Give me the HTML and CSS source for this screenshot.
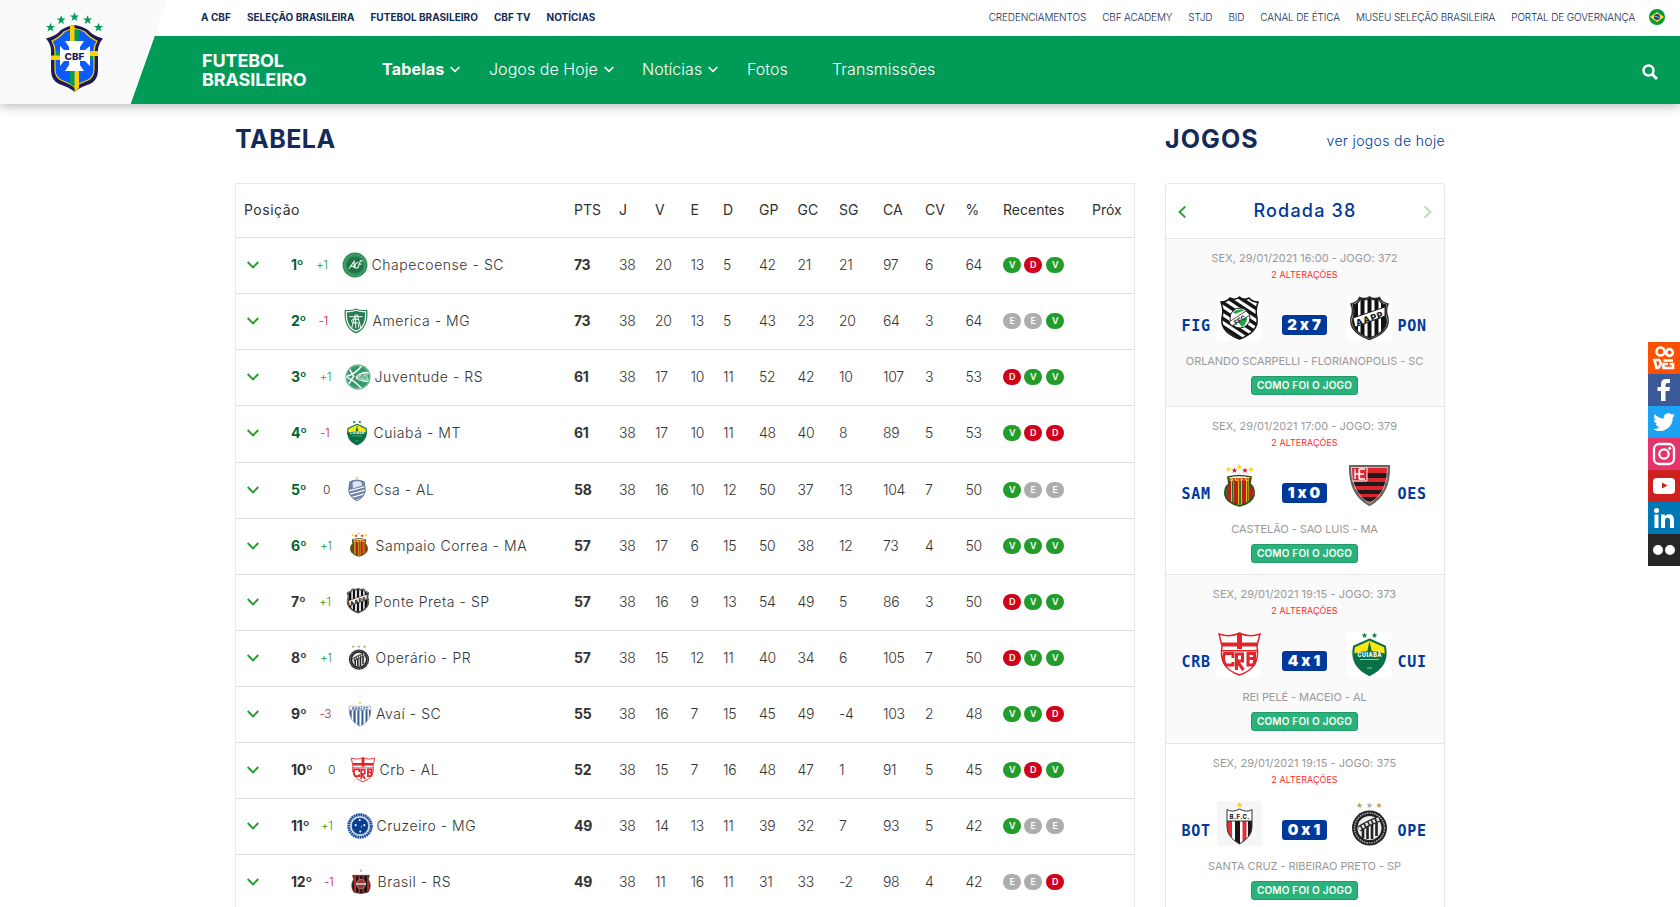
FILE: index.html
```html
<!DOCTYPE html>
<html lang="pt-BR">
<head>
<meta charset="utf-8">
<title>Futebol Brasileiro - CBF</title>
<link rel="stylesheet" href="styles.css">
</head>
<body>
<svg class="sprite" width="0" height="0" aria-hidden="true">
  <defs>
    <path id="star" d="M0-3 .8-1H3L1.2.4 1.9 2.6 0 1.3-1.9 2.6-1.2.4-3-1H-.8z"/>
    <clipPath id="c-fig"><path d="M4 6Q10 6 13 2Q18 5 22.500 1Q27 5 32 2Q35 6 41 6Q38 14 40 22Q42 36 22.500 43Q3 36 5 22Q7 14 4 6z"/></clipPath>
    <clipPath id="c-pon"><path d="M6 9Q11 8 13 3Q18 5 22.500 2Q27 5 32 3Q34 8 39 9Q37 15 39 22Q42 35 22.500 42Q3 35 6 22Q8 15 6 9z"/></clipPath>
    <clipPath id="c-sam"><path d="M11 14H34L33 20Q38 24 37 31Q35 39 22.500 41Q10 39 8 31Q7 24 12 20z"/></clipPath>
    <clipPath id="c-oes"><path d="M4 3H41Q42 30 22.500 41Q3 30 4 3z"/></clipPath>
    <clipPath id="c-crb"><path d="M2 2Q13 6 22.500 1Q32 6 43 2L40 14Q44 36 22.500 43Q1 36 5 14z"/></clipPath>
    <clipPath id="c-cui"><path d="M22.500 8 38 15Q42 34 22.500 43Q3 34 7 15z"/></clipPath>
    <clipPath id="c-bot"><path d="M10 10H35V26Q35 36 22.500 43Q10 36 10 26z"/></clipPath>
    <clipPath id="c-ava"><path d="M4 10H41Q44 34 22.500 44Q1 34 4 10z"/></clipPath>
    <clipPath id="c-csa"><path d="M10 10Q22 4 35 10L37 26Q34 38 22.500 43Q11 38 8 26z"/></clipPath>
    <clipPath id="c-bra"><path d="M8 11H37L35 18Q42 28 35 40Q22 45 10 40Q3 28 10 18z"/></clipPath>
    <clipPath id="c-juv"><circle cx="22.500" cy="22.500" r="20"/></clipPath>

    <symbol id="fig" viewBox="0 0 45 45">
      <path fill="#fff" d="M0 0h45v45H0z"/>
      <g clip-path="url(#c-fig)"><path fill="#fff" d="M0 0h45v45H0z"/><path stroke="#151515" stroke-width="3.600" d="M-4-8 49 27M-4 0 49 35M-4 8 49 43M-4 16 49 51M-4 24 49 59M-4-16 49 19M-4-24 49 11"/></g>
      <path d="M4 6Q10 6 13 2Q18 5 22.500 1Q27 5 32 2Q35 6 41 6Q38 14 40 22Q42 36 22.500 43Q3 36 5 22Q7 14 4 6z" fill="none" stroke="#151515" stroke-width="1.500"/>
      <circle cx="23" cy="22" r="10" fill="#fff" stroke="#222"/><path d="M16 16Q22 12 28 14L18 18zM19 26Q26 25 30 20Q31 27 25 31L22 27z" fill="#22a53a"/>
      <path d="M12 26 29 15 33 19 15 30z" fill="#fff" stroke="#222" stroke-width=".8"/><text x="15.500" y="26" transform="rotate(-31 23 22)" class="crest-text" font-size="6.500" fill="#333">FFC</text>
    </symbol>
    <symbol id="pon" viewBox="0 0 45 45">
      <path d="M4 8Q10 7 12.500 1.500Q18 4 22.500.8Q27 4 32.500 1.500Q35 7 41 8Q38 15 41 22Q43 36 22.500 43.500Q2 36 4 22Q7 15 4 8z" fill="#fff" stroke="#333" stroke-width="1.500"/>
      <g clip-path="url(#c-pon)"><path fill="#fff" d="M0 0h45v45H0z"/><path fill="#111" d="M6 0h5v45H6zM13.500 0h4v45h-4zM20.500 0h4v45h-4zM27.500 0h4v45h-4zM34 0h5v45h-5z"/></g>
      <path d="M6 9Q11 8 13 3Q18 5 22.500 2Q27 5 32 3Q34 8 39 9Q37 15 39 22Q42 35 22.500 42Q3 35 6 22Q8 15 6 9z" fill="none" stroke="#222" stroke-width="1.400"/>
      <path d="M6 22 38 11V20L8 31z" fill="#fff" stroke="#222"/><text x="8" y="26" transform="rotate(-18 22 22)" class="crest-text" font-size="9" textLength="28" fill="#111">AAPP</text>
    </symbol>
    <symbol id="sam" viewBox="0 0 45 45">
      <g fill="#ffd426"><use href="#star" x="11.500" y="5.500"/><use href="#star" x="22.500" y="2.800"/><use href="#star" x="34" y="5.500"/></g><g fill="#d9202c"><use href="#star" x="17.500" y="6.500"/><use href="#star" x="28" y="6.500"/></g>
      <g clip-path="url(#c-sam)"><path fill="#f0b91a" d="M0 0h45v45H0z"/><path fill="#b92118" d="M10 17h4v28h-4zM17 17h4v28h-4zM25 17h4v28h-4zM32 17h4v28h-4z"/><path fill="#267324" d="M8 17h3v25H8zM15 17h1.500v25H15zM22 17h2v25h-2zM30 17h1.500v25H30z"/><path fill="#d23d1c" d="M10 12h25v5H10z"/></g>
      <path d="M11 13Q22 10 34 13L33 20Q38 24 37 31Q35 39 22.500 42Q10 39 8 31Q7 24 12 20z" fill="none" stroke="#295314" stroke-width="1.700"/><text x="13" y="17" class="crest-text" font-size="5" textLength="19" fill="#ffe73d">SCFC</text>
    </symbol>
    <symbol id="oes" viewBox="0 0 45 45">
      <g clip-path="url(#c-oes)"><path fill="#dd2530" d="M0 0h45v45H0z"/><path fill="#1e1a1b" d="M0 9h45v5H0zM0 18h45v4H0zM0 26h45v4H0zM0 33h45v4H0z"/><path fill="#dd2530" d="M4 3h16v14H4z" stroke="#fff"/></g>
      <path d="M3 2H42Q43 30 22.500 41Q2 30 3 2z" fill="none" stroke="#666" stroke-width="2"/><path d="M4.500 3.500H40.500Q41 29 22.500 39.500Q4 29 4.500 3.500z" fill="none" stroke="#ddd" stroke-width=".7"/>
      <path d="M8 15V5M8 10H12M12 15V5M18 5H12.500V15H18M12.500 10H17" fill="none" stroke="#fff" stroke-width="1.300"/>
    </symbol>
    <symbol id="crb" viewBox="0 0 45 45">
      <path fill="#fff" d="M0 0h45v45H0z"/><g clip-path="url(#c-crb)"><path fill="#fff" d="M0 0h45v45H0z"/><path fill="#e3242b" d="M20 0h5v17h-5zM0 10.500h45v4H0zM0 18h45v1.500H0z"/></g>
      <path d="M2 2Q13 6 22.500 1Q32 6 43 2L40 14Q44 36 22.500 43Q1 36 5 14z" fill="none" stroke="#e3242b" stroke-width="1.500"/>
      <path d="M16 26V21.500H7.500Q5 28 9 33H16V30M19.500 38V22H25.500V29H20L26.500 38M31 33V21.500H37.500V26.500H32H37.500Q38 31 36 33z" fill="none" stroke="#e3242b" stroke-width="3"/>
    </symbol>
    <symbol id="cui" viewBox="0 0 45 45">
      <g fill="#137a4a"><use href="#star" x="17.500" y="3.500"/><use href="#star" x="27.500" y="3.500"/></g>
      <g clip-path="url(#c-cui)"><path fill="#ffe512" d="M0 0h45v45H0z"/><path fill="#087045" d="M22.500 9 26 25H19zM0 24Q22 14 45 24V45H0z"/></g>
      <path d="M22.500 7.500 38 14.500Q42 34 22.500 43Q3 34 7 14.500z" fill="none" stroke="#087045" stroke-width="2"/><text x="10.500" y="24.500" class="crest-text" font-size="5.500" textLength="24" fill="#fff">CUIABÁ</text><path d="M13 27.500h19M20 36h5" stroke="#8fc7ae" stroke-width="1"/>
    </symbol>
    <symbol id="bot" viewBox="0 0 45 45">
      <path fill="#f6f6f6" d="M0 0h45v45H0z"/><use href="#star" x="22.500" y="4" fill="#f5c92c"/>
      <g clip-path="url(#c-bot)"><path fill="#fff" d="M0 0h45v45H0z"/><path fill="#e12e38" d="M10 20h5v26h-5zM25.500 20h4v26h-4z"/><path fill="#171717" d="M18 20h5v26h-5zM31 20h4v26h-4z"/></g>
      <path d="M10 8.500Q15 12 22.500 8Q30 12 35 8.500V26Q35 36 22.500 43Q10 36 10 26zM10 20H35" fill="none" stroke="#333"/><text x="12.500" y="18" class="crest-text" font-size="6" textLength="20" fill="#222">B.F.C.</text>
    </symbol>
    <symbol id="ope" viewBox="0 0 45 45">
      <g fill="#c49a4b"><use href="#star" x="12.500" y="4.500"/><use href="#star" x="32" y="4.500"/></g><use href="#star" x="22.500" y="4.500" fill="#aaa"/>
      <circle cx="22.500" cy="27" r="17.500" fill="#222"/><circle cx="22.500" cy="27" r="15" fill="none" stroke="#aaa" stroke-width="1.500" stroke-dasharray="1.500 1"/><circle cx="22.500" cy="27" r="12" fill="#eee"/><path d="M16 27v10M20.500 25v13M25 23v15M29.500 22v13" stroke="#222" stroke-width="2.600"/><path d="M12 28Q19 23 32 18" stroke="#222" stroke-width="6" fill="none"/><path d="M12 28Q19 23 32 18" stroke="#ddd" stroke-width="3.500" stroke-dasharray="2.500 1.500" fill="none"/>
    </symbol>
    <symbol id="cha" viewBox="0 0 45 45">
      <circle cx="22.500" cy="22.500" r="21.500" fill="#2c8d5a"/><circle cx="22.500" cy="22.500" r="18" fill="none" stroke="#73b48e"/><circle cx="22.500" cy="22.500" r="14" fill="#1f7245"/><path d="M12 29 21 16V28M14 25H22M28 18Q21 19 23 27Q26 30 29 25M27 28 32 15 36 16M29 21H34" fill="none" stroke="#e6f2ea" stroke-width="2"/>
    </symbol>
    <symbol id="ame" viewBox="0 0 45 45">
      <path d="M3 3Q14 5 22.500 1Q31 5 42 3Q45 35 22.500 44Q0 35 3 3z" fill="#287e50"/><path d="M6 6Q15 7 22.500 4Q31 7 39 6Q41 33 22.500 40Q4 33 6 6z" fill="#287e50" stroke="#fff" stroke-width="2"/><path d="M15 35 21 12H25L31 35M11 15H34M19 26H28M22 16V35M27 20Q14 17 15 24Q17 28 22 24M27 28V34" fill="none" stroke="#fff" stroke-width="1.600"/>
    </symbol>
    <symbol id="juv" viewBox="0 0 45 45">
      <circle cx="22.500" cy="22.500" r="21.500" fill="#35986b"/><g clip-path="url(#c-juv)"><path d="M0 22Q18 18 29 3L23 0M0 22Q15 27 29 43L20 46M6 6 15 21 5 37M19 23Q30 12 45 16M19 24Q31 32 45 29" fill="none" stroke="#fff" stroke-width="2.600"/><path d="M20 20 39 17 41 28 26 29Q21 28 20 20z" fill="#9fd0b8"/><path d="M25 26 30 19 34 26 38 20" stroke="#35986b" stroke-width="1.500" fill="none"/></g><circle cx="22.500" cy="22.500" r="20" fill="none" stroke="#b9dfcc"/>
    </symbol>
    <symbol id="csa" viewBox="0 0 45 45">
      <use href="#star" x="22.500" y="3" fill="#ebc85e"/><g clip-path="url(#c-csa)"><path fill="#6f83ac" d="M0 0h45v45H0z"/><path d="M0 28 45 16M0 34 45 22M0 41 45 28M0 48 45 35" stroke="#fff" stroke-width="2"/></g><path d="M14 11Q22 5 31 11L32 17 15 22z" fill="#dfe4ef" stroke="#63799f"/><path d="M10 10Q22 4 35 10L37 26Q34 38 22.500 43Q11 38 8 26z" fill="none" stroke="#5b7198" stroke-width="1.500"/>
    </symbol>
    <symbol id="ava" viewBox="0 0 45 45">
      <use href="#star" x="22.500" y="3" fill="#ebc85e"/><g clip-path="url(#c-ava)"><path fill="#fff" d="M0 0h45v45H0z"/><path fill="#385d98" d="M4 16h4v29H4zM11 16h4v29h-4zM18 16h3.500v29H18zM25 16h3.500v29H25zM32 16h3.500v29H32zM38 16h4v29h-4z"/></g><path d="M4 9H41Q44 34 22.500 44Q1 34 4 9zM4 16H41" fill="none" stroke="#7a8aa8"/><text x="8" y="15.500" class="crest-text" font-size="7" textLength="29" fill="#385d98">AVAÍ FC</text>
    </symbol>
    <symbol id="cru" viewBox="0 0 45 45">
      <circle cx="22.500" cy="22.500" r="22" fill="#dfe7f5"/><circle cx="22.500" cy="22.500" r="19.500" fill="none" stroke="#174b9b" stroke-width="5" stroke-dasharray="3 1"/><circle cx="22.500" cy="22.500" r="15" fill="#0a3e91" stroke="#fff" stroke-width="1"/><g fill="#fff"><circle cx="22" cy="12" r="1.800"/><circle cx="15" cy="21" r="1.800"/><circle cx="30" cy="21" r="1.800"/><circle cx="23" cy="32" r="1.800"/><circle cx="25" cy="24" r="1.200"/></g>
    </symbol>
    <symbol id="bra" viewBox="0 0 45 45">
      <use href="#star" x="22.500" y="3" fill="#aaa"/><g clip-path="url(#c-bra)"><path fill="#171515" d="M0 0h45v45H0z"/><path fill="#b92a27" d="M10 10h4v35h-4zM18 10h3v35h-3zM25 10h3v35h-3zM33 10h4v35h-4z"/></g><path d="M8 11H37L35 18Q42 28 35 40Q22 45 10 40Q3 28 10 18z" fill="none" stroke="#444" stroke-width="1.500"/><circle cx="22.500" cy="26" r="8" fill="#9d3430" stroke="#c9b0ae"/><path d="M14 26H31" stroke="#ccc" stroke-width="3"/>
    </symbol>
    <symbol id="down" viewBox="0 0 12 8"><path d="M.7 1 6 6.300 11.300 1" fill="none" stroke="currentColor" stroke-width="1.900"/></symbol>
  </defs>
</svg>

<header class="header">
  <div class="logo">
    <svg class="cbf" viewBox="45 12 59 81" role="img" aria-label="CBF">
      <g fill="#009c57"><use href="#star" transform="translate(50.500 27.500) scale(1.550)"/><use href="#star" transform="translate(61.200 20) scale(1.550)"/><use href="#star" transform="translate(74.500 17) scale(1.550)"/><use href="#star" transform="translate(87.600 20) scale(1.550)"/><use href="#star" transform="translate(98.500 27.500) scale(1.550)"/></g>
      <path d="M46 38.500Q56 36 61 30Q67 26 74.500 25Q82 26 88 30Q93 36 103 38.500Q98 44 98 51V70Q98 80 90 84Q80 87 74.500 92Q69 87 59 84Q51 80 51 70V51Q51 44 46 38.500z" fill="#1d1a5c"/>
      <path d="M52 41Q59 38 64 32Q69 29 74.500 28.500Q80 29 85 32Q90 38 97 41Q94 46 94 51V69Q94 77 88 80Q80 83 74.500 87Q69 83 61 80Q55 77 55 69V51Q55 46 52 41z" fill="#0b5cff" stroke="#ffd100" stroke-width="1.200"/>
      <path d="M74.500 30H79V50H74.500zM70 60H74.500V87L70 84zM56 51H65V55.500H56zM85 56H93V60H85z" fill="#009c57"/><path d="M70 26 74.500 25V50H70zM74.500 60H79V88L74.500 92zM51 55.500H62V60H51zM88 51H98V56H88z" fill="#ffd100"/>
      <path d="M65 41H84L80 47V50H85L90 46V66L85 61H80V65L84 71H65L69 65V61H64L60 66V46L64 50H69V47z" fill="#fff"/>
      <text x="64.500" y="59.500" class="crest-text" font-size="9.500" textLength="20" lengthAdjust="spacingAndGlyphs" fill="#1d1a5c">CBF</text>
    </svg>
  </div>
  <div class="topbar">
    <nav class="top-left"><a>A CBF</a><a>SELEÇÃO BRASILEIRA</a><a>FUTEBOL BRASILEIRO</a><a>CBF TV</a><a>NOTÍCIAS</a></nav>
    <nav class="top-right"><a>CREDENCIAMENTOS</a><a>CBF ACADEMY</a><a>STJD</a><a>BID</a><a>CANAL DE ÉTICA</a><a>MUSEU SELEÇÃO BRASILEIRA</a><a>PORTAL DE GOVERNANÇA</a>
      <svg class="flag" viewBox="0 0 16 16"><circle cx="8" cy="8" r="8" fill="#0b9a32"/><path d="M1 8 8 3l7 5-7 5z" fill="#ffe12b"/><circle cx="8" cy="8" r="3" fill="#1b3f8f"/><path d="M5.500 7.300Q8 6.800 10.500 9" stroke="#fff" stroke-width=".6" fill="none"/></svg>
    </nav>
  </div>
  <div class="mainbar">
    <div class="brand">FUTEBOL<br>BRASILEIRO</div>
    <nav class="menu">
      <a class="m1">Tabelas<svg><use href="#down"/></svg></a><a class="m2">Jogos de Hoje<svg><use href="#down"/></svg></a><a class="m3">Notícias<svg><use href="#down"/></svg></a><a class="m4">Fotos</a><a class="m5">Transmissões</a>
    </nav>
    <svg class="search" viewBox="0 0 16 16"><circle cx="6.500" cy="6.500" r="5" fill="none" stroke="#fff" stroke-width="2.400"/><path d="M10 10l5 5" stroke="#fff" stroke-width="3"/></svg>
  </div>
</header>

<main class="main">
  <section class="standings">
    <div class="title"><h2>TABELA</h2></div>
    <div class="table">
      <div class="row head"><div class="poscell">Posição</div><span>PTS</span><span>J</span><span>V</span><span>E</span><span>D</span><span>GP</span><span>GC</span><span>SG</span><span>CA</span><span>CV</span><span>%</span><span>Recentes</span><span>Próx</span></div>
      <div class="row up"><div class="team t1"><svg class="arrow"><use href="#down"/></svg><b>1º</b><i class="plus">+1</i><svg class="crest"><use href="#cha"/></svg><span>Chapecoense - SC</span></div><b>73</b><span>38</span><span>20</span><span>13</span><span>5</span><span>42</span><span>21</span><span>21</span><span>97</span><span>6</span><span>64</span><div class="form"><em class="v">V</em><em class="d">D</em><em class="v">V</em></div></div>
      <div class="row up"><div class="team t2"><svg class="arrow"><use href="#down"/></svg><b>2º</b><i class="minus">-1</i><svg class="crest"><use href="#ame"/></svg><span>America - MG</span></div><b>73</b><span>38</span><span>20</span><span>13</span><span>5</span><span>43</span><span>23</span><span>20</span><span>64</span><span>3</span><span>64</span><div class="form"><em>E</em><em>E</em><em class="v">V</em></div></div>
      <div class="row up"><div class="team t3"><svg class="arrow"><use href="#down"/></svg><b>3º</b><i class="plus">+1</i><svg class="crest"><use href="#juv"/></svg><span>Juventude - RS</span></div><b>61</b><span>38</span><span>17</span><span>10</span><span>11</span><span>52</span><span>42</span><span>10</span><span>107</span><span>3</span><span>53</span><div class="form"><em class="d">D</em><em class="v">V</em><em class="v">V</em></div></div>
      <div class="row up"><div class="team t4"><svg class="arrow"><use href="#down"/></svg><b>4º</b><i class="minus">-1</i><svg class="crest"><use href="#cui"/></svg><span>Cuiabá - MT</span></div><b>61</b><span>38</span><span>17</span><span>10</span><span>11</span><span>48</span><span>40</span><span>8</span><span>89</span><span>5</span><span>53</span><div class="form"><em class="v">V</em><em class="d">D</em><em class="d">D</em></div></div>
      <div class="row up"><div class="team t5"><svg class="arrow"><use href="#down"/></svg><b>5º</b><i>0</i><svg class="crest"><use href="#csa"/></svg><span>Csa - AL</span></div><b>58</b><span>38</span><span>16</span><span>10</span><span>12</span><span>50</span><span>37</span><span>13</span><span>104</span><span>7</span><span>50</span><div class="form"><em class="v">V</em><em>E</em><em>E</em></div></div>
      <div class="row up"><div class="team t6"><svg class="arrow"><use href="#down"/></svg><b>6º</b><i class="plus">+1</i><svg class="crest"><use href="#sam"/></svg><span>Sampaio Correa - MA</span></div><b>57</b><span>38</span><span>17</span><span>6</span><span>15</span><span>50</span><span>38</span><span>12</span><span>73</span><span>4</span><span>50</span><div class="form"><em class="v">V</em><em class="v">V</em><em class="v">V</em></div></div>
      <div class="row"><div class="team t7"><svg class="arrow"><use href="#down"/></svg><b>7º</b><i class="plus">+1</i><svg class="crest"><use href="#pon"/></svg><span>Ponte Preta - SP</span></div><b>57</b><span>38</span><span>16</span><span>9</span><span>13</span><span>54</span><span>49</span><span>5</span><span>86</span><span>3</span><span>50</span><div class="form"><em class="d">D</em><em class="v">V</em><em class="v">V</em></div></div>
      <div class="row"><div class="team t8"><svg class="arrow"><use href="#down"/></svg><b>8º</b><i class="plus">+1</i><svg class="crest"><use href="#ope"/></svg><span>Operário - PR</span></div><b>57</b><span>38</span><span>15</span><span>12</span><span>11</span><span>40</span><span>34</span><span>6</span><span>105</span><span>7</span><span>50</span><div class="form"><em class="d">D</em><em class="v">V</em><em class="v">V</em></div></div>
      <div class="row"><div class="team t9"><svg class="arrow"><use href="#down"/></svg><b>9º</b><i class="minus">-3</i><svg class="crest"><use href="#ava"/></svg><span>Avaí - SC</span></div><b>55</b><span>38</span><span>16</span><span>7</span><span>15</span><span>45</span><span>49</span><span>-4</span><span>103</span><span>2</span><span>48</span><div class="form"><em class="v">V</em><em class="v">V</em><em class="d">D</em></div></div>
      <div class="row"><div class="team t10"><svg class="arrow"><use href="#down"/></svg><b>10º</b><i>0</i><svg class="crest"><use href="#crb"/></svg><span>Crb - AL</span></div><b>52</b><span>38</span><span>15</span><span>7</span><span>16</span><span>48</span><span>47</span><span>1</span><span>91</span><span>5</span><span>45</span><div class="form"><em class="v">V</em><em class="d">D</em><em class="v">V</em></div></div>
      <div class="row"><div class="team t11"><svg class="arrow"><use href="#down"/></svg><b>11º</b><i class="plus">+1</i><svg class="crest"><use href="#cru"/></svg><span>Cruzeiro - MG</span></div><b>49</b><span>38</span><span>14</span><span>13</span><span>11</span><span>39</span><span>32</span><span>7</span><span>93</span><span>5</span><span>42</span><div class="form"><em class="v">V</em><em>E</em><em>E</em></div></div>
      <div class="row"><div class="team t12"><svg class="arrow"><use href="#down"/></svg><b>12º</b><i class="minus">-1</i><svg class="crest"><use href="#bra"/></svg><span>Brasil - RS</span></div><b>49</b><span>38</span><span>11</span><span>16</span><span>11</span><span>31</span><span>33</span><span>-2</span><span>98</span><span>4</span><span>42</span><div class="form"><em>E</em><em>E</em><em class="d">D</em></div></div>
    </div>
  </section>

  <aside class="games">
    <div class="title"><h2>JOGOS</h2><a>ver jogos de hoje</a></div>
    <div class="panel">
      <div class="round"><svg viewBox="0 0 8 12"><path d="M7.300 .5 1.500 6 7.300 11.500" fill="none" stroke="#229d2b" stroke-width="1.800"/></svg><h3>Rodada 38</h3><svg class="next" viewBox="0 0 8 12"><path d="M.7 .5 6.500 6 .7 11.500" fill="none" stroke="#229d2b" stroke-width="1.800"/></svg></div>
      <article class="match shade"><div class="date">SEX, 29/01/2021 16:00 - JOGO: 372</div><div class="changes">2 ALTERAÇÕES</div><div class="teams"><b>FIG</b><svg><use href="#fig"/></svg><strong>2 x 7</strong><svg class="white"><use href="#pon"/></svg><b>PON</b></div><div class="venue">ORLANDO SCARPELLI - FLORIANOPOLIS - SC</div><a class="btn">COMO FOI O JOGO</a></article>
      <article class="match"><div class="date">SEX, 29/01/2021 17:00 - JOGO: 379</div><div class="changes">2 ALTERAÇÕES</div><div class="teams"><b>SAM</b><svg><use href="#sam"/></svg><strong>1 x 0</strong><svg><use href="#oes"/></svg><b>OES</b></div><div class="venue">CASTELÃO - SAO LUIS - MA</div><a class="btn">COMO FOI O JOGO</a></article>
      <article class="match shade"><div class="date">SEX, 29/01/2021 19:15 - JOGO: 373</div><div class="changes">2 ALTERAÇÕES</div><div class="teams"><b>CRB</b><svg><use href="#crb"/></svg><strong>4 x 1</strong><svg class="white"><use href="#cui"/></svg><b>CUI</b></div><div class="venue">REI PELÉ - MACEIO - AL</div><a class="btn">COMO FOI O JOGO</a></article>
      <article class="match"><div class="date">SEX, 29/01/2021 19:15 - JOGO: 375</div><div class="changes">2 ALTERAÇÕES</div><div class="teams"><b>BOT</b><svg><use href="#bot"/></svg><strong>0 x 1</strong><svg><use href="#ope"/></svg><b>OPE</b></div><div class="venue">SANTA CRUZ - RIBEIRAO PRETO - SP</div><a class="btn">COMO FOI O JOGO</a></article>
    </div>
  </aside>
</main>

<div class="social">
  <svg viewBox="0 0 32 32"><path fill="#ff5000" d="M0 0h32v32H0z"/><g fill="none" stroke="#fff" stroke-width="2.600"><circle cx="12.500" cy="9.500" r="4"/><circle cx="21.500" cy="10.500" r="3.400"/><path d="M6.500 18h4.500q4 3.500-1 8H8.500zM15.500 18.500H25M20 22h-4.500v4H25v-4h-3.500"/></g></svg>
  <svg viewBox="0 0 32 32"><path fill="#3b5998" d="M0 0h32v32H0z"/><path fill="#fff" d="M13 27V17H9.500v-4H13v-3q0-5 5-5h4v4h-2.500q-2 0-2 2v2H22l-.6 4h-3.900v10z"/></svg>
  <svg viewBox="0 0 32 32"><path fill="#1da1f2" d="M0 0h32v32H0z"/><path fill="#fff" d="M27 9.300a9 9 0 0 1-2.500.7 4.500 4.500 0 0 0 2-2.500 9 9 0 0 1-2.900 1.100 4.500 4.500 0 0 0-7.700 4.100 12.800 12.800 0 0 1-9.200-4.700 4.500 4.500 0 0 0 1.400 6 4.500 4.500 0 0 1-2-.6 4.500 4.500 0 0 0 3.600 4.500 4.500 4.500 0 0 1-2 .1 4.500 4.500 0 0 0 4.200 3.100A9 9 0 0 1 5 22.900a12.800 12.800 0 0 0 19.700-11.400A9 9 0 0 0 27 9.300z"/></svg>
  <svg viewBox="0 0 32 32"><path fill="#e4356b" d="M0 0h32v32H0z"/><rect x="6" y="6" width="20" height="20" rx="5" fill="none" stroke="#fff" stroke-width="2.300"/><circle cx="16" cy="16" r="4.700" fill="none" stroke="#fff" stroke-width="2.200"/><circle cx="21.700" cy="10.300" r="1.500" fill="#fff"/></svg>
  <svg viewBox="0 0 32 32"><path fill="#cd201f" d="M0 0h32v32H0z"/><rect x="5" y="8" width="22" height="16" rx="4" fill="#fff"/><path d="M14 12.500v6l5.500-3z" fill="#cd201f"/></svg>
  <svg viewBox="0 0 32 32"><path fill="#0077b5" d="M0 0h32v32H0z"/><circle cx="8.500" cy="8.500" r="2.500" fill="#fff"/><path fill="#fff" d="M6.500 12.500h4V26h-4zM13 12.500h3.800v2q1.200-2.300 4.200-2.300 5 0 5 5.800v8h-4v-7q0-3.300-2.300-3.300Q17 15.700 17 19v7h-4z"/></svg>
  <svg viewBox="0 0 32 32"><path fill="#262626" d="M0 0h32v32H0z"/><circle cx="10" cy="16" r="5" fill="#fff"/><circle cx="22" cy="16" r="5" fill="#fff"/></svg>
</div>
</body>
</html>
```

FILE: styles.css
```css
* { box-sizing: border-box; }
body { margin: 0; width: 1680px; height: 907px; overflow: hidden; background: #fff; color: #333; font-family: Inter, "Open Sans", sans-serif; font-feature-settings: "calt" 0; }
svg { display: block; flex: none; }
h2, h3 { margin: 0; }
.sprite { position: absolute; }
.crest-text { font-family: Inter, sans-serif; font-weight: 800; }

.header { display: grid; grid-template: 36px 68px / 201px 1fr; height: 104px; background: #fff; box-shadow: 0 2px 10px rgba(0,0,0,.3); position: relative; }
.logo { grid-row: 1 / 3; grid-column: 1; background: #fafafa; clip-path: polygon(0 0, 167.400px 0, 130.500px 104px, 0 104px); z-index: 1; padding: 12px 0 0 45px; }
.cbf { width: 59px; height: 81px; }
.topbar { grid-row: 1; grid-column: 2; display: flex; justify-content: space-between; align-items: center; padding: 0 15px 2px 0; color: #132b56; white-space: nowrap; }
.top-left, .top-right { display: flex; align-items: center; gap: 16px; font-size: 10px; line-height: 14px; }
.top-left { font-weight: 650; letter-spacing: .03px; }
.top-right { font-weight: 350; letter-spacing: -.13px; }
.flag { width: 16px; height: 16px; margin-left: -2px; }
.mainbar { grid-row: 2; grid-column: 1 / 3; display: flex; background: #009c57; clip-path: polygon(154.600px 0, 100% 0, 100% 100%, 130.500px 100%); color: #fff; padding: 0 22px 0 202px; }
.brand { width: 180px; padding-top: 15px; font-weight: 650; font-size: 18px; line-height: 19px; letter-spacing: -.1px; }
.menu { display: flex; flex: 1; font-size: 16px; line-height: 20px; padding-bottom: 2px; white-space: nowrap; font-weight: 350; letter-spacing: .05px; }
.menu a { display: flex; align-items: center; gap: 6px; }
.menu svg { width: 10px; height: 7px; }
.menu .m1 { width: 107px; font-weight: 700; letter-spacing: .2px; }
.m2 { width: 153px; }
.m3 { width: 105px; }
.m4 { width: 85px; }
.search { width: 16px; height: 16px; margin-top: 28px; }

.main { display: flex; gap: 30px; padding-left: 235px; }
.standings { width: 900px; }
.games { width: 280px; }
.title { height: 79px; padding-bottom: 10px; display: flex; align-items: center; justify-content: space-between; }
.title h2 { font-size: 25px; line-height: 30px; font-weight: 700; color: #132b56; letter-spacing: .5px; }
.games .title h2 { letter-spacing: 1.100px; }
.title a { font-size: 14px; font-weight: 350; letter-spacing: .35px; color: #00399a; padding-top: 4px; }
.table { border: 1px solid #e8eaea; }
.row { display: grid; grid-template-columns: 338px 45px 36px 35.500px 32.500px 36px 38.500px 41.500px 44px 42px 40.500px 37.500px 89px 1fr; align-items: center; height: 56.130px; padding-bottom: 2px; border-bottom: 1px solid #ddd; font-size: 14px; font-weight: 350; letter-spacing: -.3px; white-space: nowrap; }
.row.head { height: 54px; font-weight: 400; letter-spacing: 0; color: #303030; }
.poscell { padding-left: 8px; letter-spacing: .5px; }
.row b { font-weight: 700; }
.team { display: flex; align-items: center; }
.team span { letter-spacing: .55px; }
.arrow { width: 12px; height: 8px; margin: 1px 32px 0 11px; color: #229d2b; }
.team b { width: 25px; letter-spacing: -.2px; }
.up .team b { color: #00632f; }
.team i { font-style: normal; font-size: 12px; width: 26px; letter-spacing: -.5px; }
.plus { color: #229d2b; }
.minus { color: #cb1735; }
.crest { width: 26px; height: 26px; margin-right: 3.500px; }
.t2 b { width: 27.500px; } .t2 i { width: 24.500px; }
.t3 b { width: 28.500px; } .t3 i { width: 25.500px; }
.t4 b { width: 29px; } .t4 i { width: 24px; }
.t5 b { width: 32px; } .t5 i { width: 21px; }
.t6 b { width: 29px; }
.t7 b { width: 28px; } .t7 i { width: 25.500px; }
.t8 b { width: 29px; }
.t9 b { width: 28.500px; } .t9 i { width: 27px; }
.t10 b { width: 37px; } .t10 i { width: 22px; }
.t11 b { width: 30px; }
.t12 b { width: 33px; } .t12 i { width: 24px; }
.form { display: flex; gap: 3px; padding-top: 1px; }
.form em { width: 18px; height: 16px; border-radius: 9px; background: #adadad; color: #fff; font: 600 9px/16px Inter, sans-serif; text-align: center; }
.form em:last-child { margin-left: 1px; }
.form .v { background: #229d2b; }
.form .d { background: #d00219; }

.panel { border: 1px solid #e6e6e6; border-radius: 3px; }
.round { height: 55px; display: flex; align-items: center; justify-content: space-between; padding: 0 12px 1px; border-bottom: 1px solid #e6e6e6; }
.round svg { width: 8px; height: 12px; margin-top: 3px; }
.round .next { opacity: .35; }
.round h3 { font-weight: 450; font-size: 18px; letter-spacing: 1.200px; color: #00399a; }
.match { height: 168.200px; display: flex; flex-direction: column; align-items: center; border-bottom: 1px solid #e6e6e6; color: #999; white-space: nowrap; padding: 11px 1px 0 0; }
.shade { background: #fafafa; }
.date, .venue { font-size: 11px; line-height: 16px; }
.date { letter-spacing: .03px; }
.changes { font-size: 9px; line-height: 12px; margin-top: 3px; color: #ff2a2a; letter-spacing: .03px; }
.teams { display: flex; margin-top: 15px; height: 45px; color: #00399a; }
.teams b { width: 35px; padding-top: 20px; font: 700 15px/20px "DejaVu Sans Mono", monospace; letter-spacing: .7px; }
.teams svg + b { width: 30px; margin-left: 6px; }
.teams svg { width: 45px; height: 45px; }
.teams .white { background: #fff; }
.teams strong { width: 45px; height: 20px; margin: 19px 20px 0; border-radius: 3px; background: #00399a; color: #fff; font-size: 15px; line-height: 20px; font-weight: 900; text-align: center; }
.venue { margin-top: 12px; letter-spacing: -.07px; }
.btn { width: 107px; height: 19px; margin-top: 7px; border: 1px solid #239a69; border-radius: 3px; background: #2ab27b; color: #fff; text-align: center; font-size: 10px; line-height: 17px; font-weight: 600; letter-spacing: .2px; }
.social { position: absolute; right: 0; top: 342px; width: 32px; display: grid; }
.social svg { width: 32px; height: 32px; }
```
